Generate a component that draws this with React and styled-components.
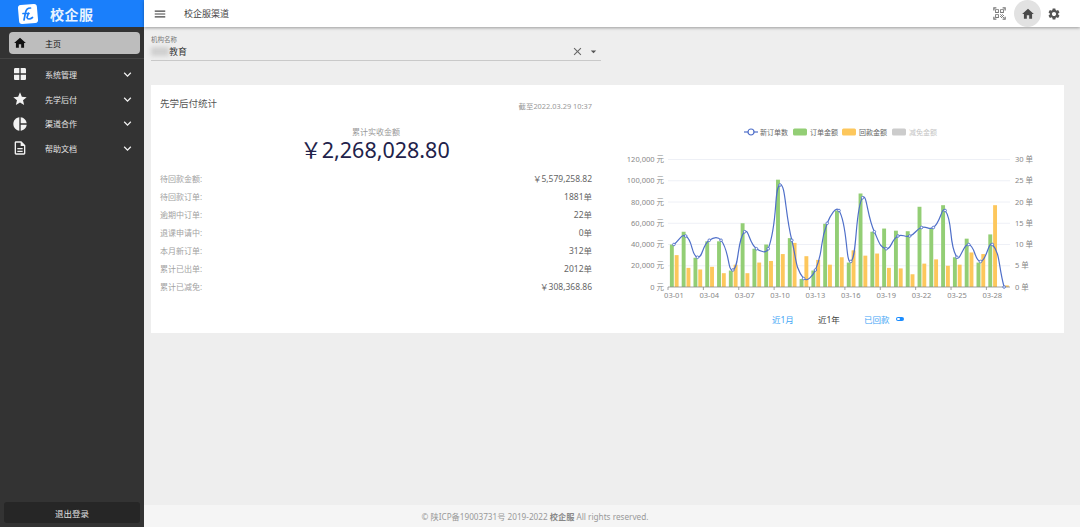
import React from 'react';
import styled, { createGlobalStyle } from 'styled-components';
import {
  MdHome, MdWindow, MdStar, MdPieChart, MdOutlineDescription, MdExpandMore,
  MdMenu, MdSettings, MdQrCodeScanner, MdClose, MdArrowDropDown,
} from 'react-icons/md';

const GlobalStyle = createGlobalStyle`
  html, body, #root { margin: 0; height: 100%; }
  body {
    font-family: "Noto Sans", "Noto Sans CJK SC", sans-serif;
    background: #eeeeee;
    overflow: hidden;
  }
`;

const Page = styled.div`
  display: flex;
  width: 1080px;
  height: 527px;
`;

const Sidebar = styled.aside`
  width: 144px;
  flex: none;
  display: flex;
  flex-direction: column;
  background: #333333;
`;

const Brand = styled.div`
  height: 27px;
  display: flex;
  align-items: center;
  gap: 11px;
  padding-left: 17px;
  background: #1a7ffb;
`;

const BrandName = styled.span`
  color: #e8f3ff;
  font-size: 14px;
  font-weight: 700;
  letter-spacing: 0.5px;
`;

const ActiveItem = styled.div`
  height: 22px;
  margin: 5px 4px 0 9px;
  display: flex;
  align-items: center;
  border-radius: 4px;
  background: #bdbdbd;
  color: #111;
  font-size: 8px;
  svg { width: 14px; height: 14px; margin: 0 18px 0 4px; }
`;

const Divider = styled.div`
  height: 1px;
  margin: 4px 0 3px;
  background: #444444;
`;

const NavList = styled.nav`
  display: flex;
  flex-direction: column;
`;

const NavItem = styled.div`
  height: 24.7px;
  display: flex;
  align-items: center;
  padding-left: 12px;
  color: #e4e4e4;
  font-size: 8px;
`;

const NavIcon = styled.span`
  width: 16px;
  height: 16px;
  margin-right: 17px;
  display: flex;
  color: #f2f2f2;
  svg { width: 16px; height: 16px; }
`;

const NavLabel = styled.span`
  flex: 1;
`;

const NavArrow = styled(MdExpandMore)`
  width: 15px;
  height: 15px;
  margin-right: 9px;
  color: #f2f2f2;
`;

const LogoutButton = styled.div`
  margin: auto 4px 4px;
  height: 21px;
  display: flex;
  align-items: center;
  justify-content: center;
  border-radius: 3px;
  background: #262626;
  color: #e0e0e0;
  font-size: 8.5px;
`;

const Body = styled.div`
  flex: 1;
  min-width: 0;
  display: flex;
  flex-direction: column;
`;

const TopBar = styled.header`
  height: 27px;
  flex: none;
  display: flex;
  align-items: center;
  padding: 0 19px 0 9px;
  background: #fff;
  box-shadow: 0 1px 3px rgba(0, 0, 0, 0.35);
  color: #444;
  font-size: 9px;
  position: relative;
  svg { display: block; }
`;

const TopTitle = styled.span`
  flex: 1;
  margin-left: 17px;
`;

const ScanIcon = styled(MdQrCodeScanner)`
  width: 15px;
  height: 15px;
  margin-right: 7px;
  color: #777;
`;

const HomeButton = styled.div`
  width: 27px;
  height: 27px;
  margin-right: 6px;
  display: flex;
  align-items: center;
  justify-content: center;
  border-radius: 50%;
  background: #e2e2e2;
  color: #4a4a4a;
`;

const Content = styled.main`
  flex: 1;
  padding: 8px 16px 0 7px;
`;

const Field = styled.div`
  width: 450px;
  height: 26px;
  box-sizing: border-box;
  border-bottom: 1.5px solid #c9c9c9;
  display: flex;
  flex-direction: column;
`;

const FieldLabel = styled.label`
  font-size: 6.5px;
  line-height: 9px;
  color: #777;
`;

const FieldRow = styled.div`
  display: flex;
  align-items: center;
  height: 14px;
  color: #333;
  font-size: 9px;
`;

const Redacted = styled.span`
  width: 18px;
  height: 9px;
  background: #cfcfcf;
  filter: blur(2px);
`;

const FieldValue = styled.span`
  flex: 1;
`;

const ClearIcon = styled(MdClose)`
  width: 13px;
  height: 13px;
  color: #666;
  margin-right: 3px;
`;

const DropIcon = styled(MdArrowDropDown)`
  width: 13px;
  height: 13px;
  color: #555;
  margin-right: 1px;
`;

const Card = styled.section`
  height: 248px;
  margin-top: 24px;
  padding: 12px 9px 0;
  box-sizing: border-box;
  display: grid;
  grid-template-columns: 432px 1fr;
  background: #fff;
`;

const Summary = styled.div`
  display: flex;
  flex-direction: column;
`;

const SummaryHead = styled.div`
  display: flex;
  justify-content: space-between;
  align-items: flex-end;
  height: 14px;
`;

const CardTitle = styled.h2`
  margin: 0;
  font-size: 9.5px;
  line-height: 14px;
  font-weight: 400;
  color: #555;
`;

const AsOf = styled.span`
  font-size: 7.4px;
  line-height: 10px;
  color: #999;
`;

const TotalLabel = styled.div`
  margin-top: 15px;
  text-align: center;
  font-size: 8px;
  line-height: 11px;
  color: #999;
`;

const TotalValue = styled.div`
  text-align: center;
  font-size: 21.5px;
  line-height: 26px;
  color: #22224a;
  padding-right: 2px;
`;

const StatList = styled.dl`
  margin: 6px 0 0;
  display: flex;
  flex-direction: column;
`;

const StatRow = styled.div`
  height: 18px;
  display: flex;
  align-items: center;
  justify-content: space-between;
  font-size: 8px;
`;

const StatName = styled.dt`
  color: #a2a2a2;
`;

const StatValue = styled.dd`
  margin: 0;
  font-size: 8.5px;
  color: #666;
`;

const ChartPane = styled.div`
  display: flex;
  flex-direction: column;
  margin-top: 23px;
`;

const ChartSvg = styled.svg`
  display: block;
  width: 430px;
  height: 185px;
  margin-left: 28px;
  font-family: "Noto Sans", "Noto Sans CJK SC", sans-serif;
`;

const RangeBar = styled.div`
  display: flex;
  align-items: center;
  margin: 8px 0 0 180px;
  font-size: 8.5px;
  color: #42a5f5;
`;

const RangeTab = styled.span`
  width: 46px;
  color: ${p => (p.$active ? '#444' : '#42a5f5')};
`;

const PaidLabel = styled.span`
  margin-right: 6px;
`;

const Toggle = styled.span`
  position: relative;
  width: 8px;
  height: 4px;
  border-radius: 2px;
  background: #1a8cff;
  &::after {
    content: '';
    position: absolute;
    left: 1px;
    top: 1px;
    width: 3px;
    height: 2px;
    border-radius: 1px;
    background: #fff;
  }
`;

const Footer = styled.footer`
  height: 22px;
  flex: none;
  display: flex;
  align-items: center;
  justify-content: center;
  padding-right: 154px;
  background: #f5f5f5;
  color: #999;
  font-size: 8.2px;
  b { color: #888; font-weight: 700; }
`;

const stats = [
  ['待回款金额:', '￥5,579,258.82'],
  ['待回款订单:', '1881单'],
  ['逾期中订单:', '22单'],
  ['退课申请中:', '0单'],
  ['本月新订单:', '312单'],
  ['累计已出单:', '2012单'],
  ['累计已减免:', '￥308,368.86'],
];

const navItems = [
  { label: '系统管理', icon: <MdWindow /> },
  { label: '先学后付', icon: <MdStar /> },
  { label: '渠道合作', icon: <MdPieChart /> },
  { label: '帮助文档', icon: <MdOutlineDescription /> },
];

const orderAmount = [40, 52, 27.5, 43, 43, 15.5, 60, 36, 40, 101, 46, 7.5, 15.5, 59.5, 72, 23, 88, 52, 55, 53, 52.5, 75.5, 55, 77, 28, 45.5, 23, 49.5, 0];
const paidAmount = [30, 18, 16.5, 19, 13, 21, 13, 23, 24.5, 31, 41.5, 29, 25.5, 21, 28, 34.5, 29.5, 31.5, 18, 17.5, 12, 22, 26, 20, 21, 32.5, 31, 77, 1.5];
const orderCount = [10, 12, 7, 11, 11, 4, 13, 9, 9, 24, 11, 2, 4, 15, 18, 6, 21, 13, 9, 12, 12, 14, 14, 18, 7, 10, 6, 10, 0];

// chart geometry, in svg pixels (the svg starts at x=620 y=120 of the page)
const LEFT = 48;
const RIGHT = 390;
const BOTTOM = 167;
const TOP = 39.5;
const STEP = (RIGHT - LEFT) / 29;
const centerX = i => LEFT + STEP * (i + 0.5);
const amountY = v => BOTTOM - (v / 120) * (BOTTOM - TOP);
const countY = v => BOTTOM - (v / 30) * (BOTTOM - TOP);

const smoothPath = pts => {
  let d = `M${pts[0][0]} ${pts[0][1]}`;
  const ctrl = i => {
    const p = pts[i];
    const a = pts[Math.max(i - 1, 0)];
    const b = pts[Math.min(i + 1, pts.length - 1)];
    const la = Math.hypot(p[0] - a[0], p[1] - a[1]);
    const lb = Math.hypot(p[0] - b[0], p[1] - b[1]);
    const sum = la + lb || 1;
    const vx = (b[0] - a[0]) * 0.5;
    const vy = (b[1] - a[1]) * 0.5;
    return {
      in: [p[0] - (vx * la) / sum, p[1] - (vy * la) / sum],
      out: [p[0] + (vx * lb) / sum, p[1] + (vy * lb) / sum],
    };
  };
  for (let i = 0; i < pts.length - 1; i++) {
    const c1 = ctrl(i).out;
    const c2 = ctrl(i + 1).in;
    const e = pts[i + 1];
    d += `C${c1[0]} ${c1[1]} ${c2[0]} ${c2[1]} ${e[0]} ${e[1]}`;
  }
  return d;
};

const linePoints = orderCount.map((v, i) => [centerX(i), countY(v)]);
const axisText = { fontSize: 7.5, fill: '#888' };

const LegendKey = ({ x, color, label, muted }) => (
  <g>
    <rect x={x} y={-3.500} width={14} height={7} rx={1.5} fill={color} />
    <text x={x + 17} y={2.500} fontSize={7} fill={muted ? '#c4c4c4' : '#666'}>{label}</text>
  </g>
);

const Chart = () => (
  <ChartSvg viewBox="0 0 430 185">
    <g transform="translate(124 12)">
      <path d="M0 0H14" stroke="#4f6fc9" strokeWidth="1.2" />
      <circle cx="7" cy="0" r="3" fill="#fff" stroke="#4f6fc9" strokeWidth="1.2" />
      <text x="16" y="2.500" fontSize="7" fill="#666">新订单数</text>
      <LegendKey x={49} color="#93ce75" label="订单金额" />
      <LegendKey x={98} color="#fdc75c" label="回款金额" />
      <LegendKey x={148} color="#cccccc" label="减免金额" muted />
    </g>
    {[0, 1, 2, 3, 4, 5, 6].map(k => {
      const y = BOTTOM - (k * (BOTTOM - TOP)) / 6;
      return (
        <g key={k}>
          {k > 0 && <path d={`M${LEFT} ${y}H${RIGHT}`} stroke="#eef0f6" strokeWidth="1" />}
          <text x={LEFT - 4} y={y + 2.5} textAnchor="end" {...axisText}>{(k * 20000).toLocaleString('en-US')} 元</text>
          <text x={RIGHT + 5} y={y + 2.5} {...axisText}>{k * 5} 单</text>
        </g>
      );
    })}
    {orderAmount.map((v, i) => (
      <rect key={i} x={centerX(i) - 4} y={amountY(v)} width={3.9} height={BOTTOM - amountY(v)} fill="#93ce75" />
    ))}
    {paidAmount.map((v, i) => (
      <rect key={i} x={centerX(i) + 0.8} y={amountY(v)} width={3.9} height={BOTTOM - amountY(v)} fill="#fdc75c" />
    ))}
    <path d={`M${LEFT} ${BOTTOM}H${RIGHT}`} stroke="#8a8a8a" strokeWidth="0.8" />
    {orderCount.map((_, i) => (i % 3 === 0 ? (
      <g key={i}>
        <path d={`M${LEFT + STEP * i} ${BOTTOM}v3`} stroke="#8a8a8a" strokeWidth="0.8" />
        <text x={centerX(i)} y={BOTTOM + 11} textAnchor="middle" {...axisText}>{`03-${String(i + 1).padStart(2, '0')}`}</text>
      </g>
    ) : null))}
    <path d={smoothPath(linePoints)} fill="none" stroke="#4f6fc9" strokeWidth="1.2" />
    {linePoints.map(([x, y], i) => (
      <circle key={i} cx={x} cy={y} r="1.3" fill="#fff" stroke="#4f6fc9" strokeWidth="0.9" />
    ))}
  </ChartSvg>
);

const Logo = () => (
  <svg width="22" height="22" viewBox="0 0 22 22">
    <rect x="1.5" y="1.5" width="19" height="19" rx="3" fill="#fff" transform="rotate(-5 11 11)" />
    <path d="M13.5 5C10 5 9 6.500 8.500 9.500L7 17M6 10.500H12M11.500 10L10 14.500C10.500 16.500 13 16.500 15.500 14.500" fill="none" stroke="#1a7ffb" strokeWidth="1.700" strokeLinecap="round" />
  </svg>
);

export default function App() {
  return (
    <Page>
      <GlobalStyle />
      <Sidebar>
        <Brand>
          <Logo />
          <BrandName>校企服</BrandName>
        </Brand>
        <ActiveItem><MdHome />主页</ActiveItem>
        <Divider />
        <NavList>
          {navItems.map(item => (
            <NavItem key={item.label}>
              <NavIcon>{item.icon}</NavIcon>
              <NavLabel>{item.label}</NavLabel>
              <NavArrow />
            </NavItem>
          ))}
        </NavList>
        <LogoutButton>退出登录</LogoutButton>
      </Sidebar>
      <Body>
        <TopBar>
          <MdMenu size={14} />
          <TopTitle>校企服渠道</TopTitle>
          <ScanIcon />
          <HomeButton><MdHome size={14} /></HomeButton>
          <MdSettings size={14} color="#555" />
        </TopBar>
        <Content>
          <Field>
            <FieldLabel>机构名称</FieldLabel>
            <FieldRow>
              <Redacted />
              <FieldValue>教育</FieldValue>
              <ClearIcon />
              <DropIcon />
            </FieldRow>
          </Field>
          <Card>
            <Summary>
              <SummaryHead>
                <CardTitle>先学后付统计</CardTitle>
                <AsOf>截至2022.03.29 10:37</AsOf>
              </SummaryHead>
              <TotalLabel>累计实收金额</TotalLabel>
              <TotalValue>￥2,268,028.80</TotalValue>
              <StatList>
                {stats.map(([name, value]) => (
                  <StatRow key={name}>
                    <StatName>{name}</StatName>
                    <StatValue>{value}</StatValue>
                  </StatRow>
                ))}
              </StatList>
            </Summary>
            <ChartPane>
              <Chart />
              <RangeBar>
                <RangeTab>近1月</RangeTab>
                <RangeTab $active>近1年</RangeTab>
                <PaidLabel>已回款</PaidLabel>
                <Toggle />
              </RangeBar>
            </ChartPane>
          </Card>
        </Content>
        <Footer>© 陕ICP备19003731号 2019-2022&nbsp;<b>校企服</b>&nbsp;All rights reserved.</Footer>
      </Body>
    </Page>
  );
}
